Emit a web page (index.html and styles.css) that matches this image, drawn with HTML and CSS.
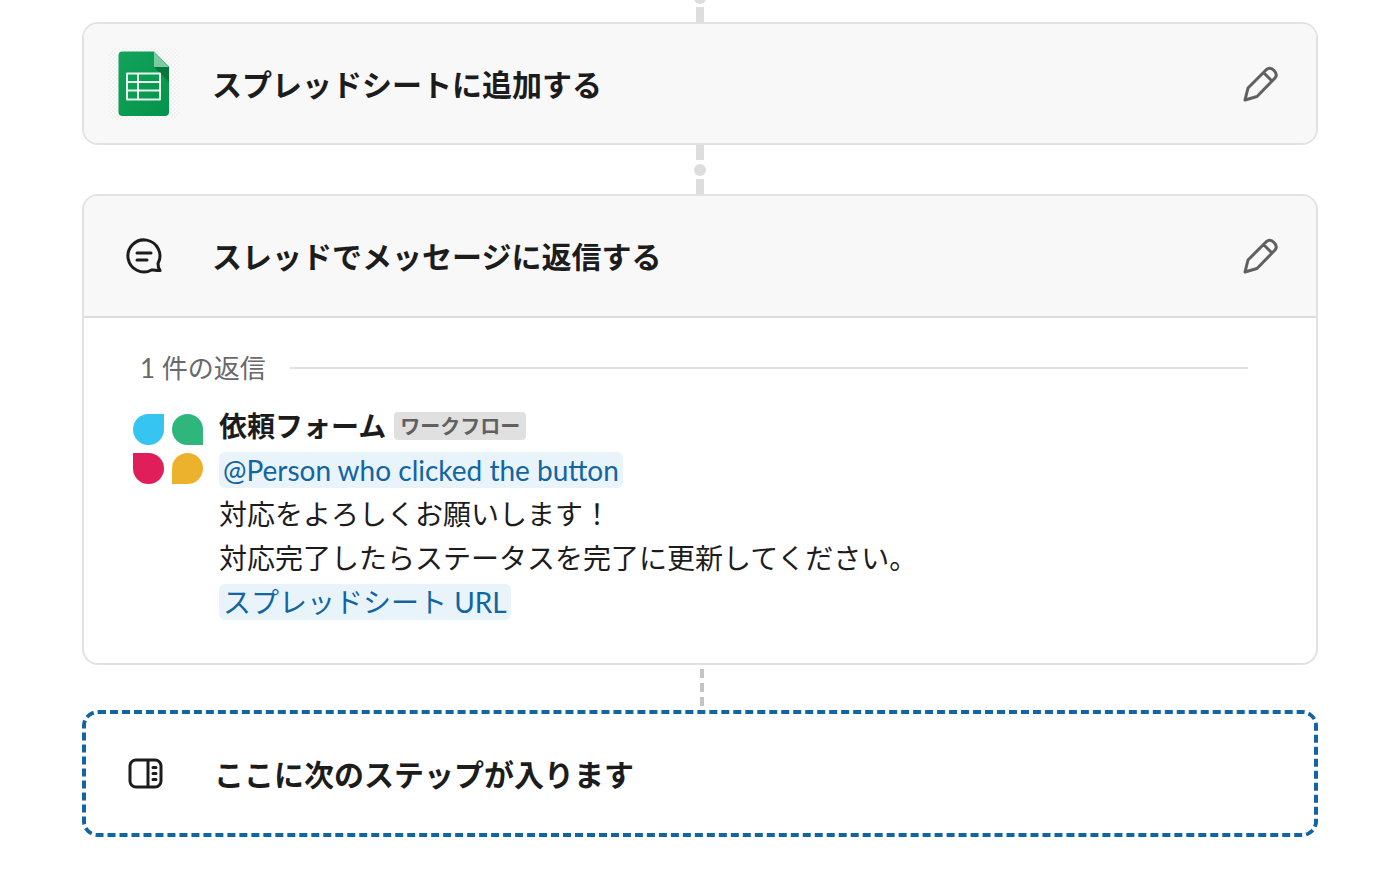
FILE: index.html
```
<!DOCTYPE html>
<html lang="ja">
<head>
    <meta charset="UTF-8">
    <meta name="viewport" content="width=device-width, initial-scale=1.0">
    <title>ワークフロー</title>
    <link rel="stylesheet" href="styles.css">
</head>
<body>
    <main class="workflow">
        <div class="connector connector-first"><span class="dot"></span></div>

        <section class="step">
            <div class="step-header">
                <div class="step-icon sheets-icon">
                    <svg width="72" height="72" viewBox="0 0 72 72" aria-hidden="true">
                        <defs>
                            <linearGradient id="sheet" x1="0" y1="0" x2="1" y2="1">
                                <stop offset="0" stop-color="#12a35c"/>
                                <stop offset="1" stop-color="#04934a"/>
                            </linearGradient>
                        </defs>
                        <path d="M14.500 3.500H46l15 15v45.500a4 4 0 0 1-4 4H14.500a4 4 0 0 1-4-4v-56.500a4 4 0 0 1 4-4z" fill="url(#sheet)"/>
                        <path d="M46 19h15v15z" fill="#04763a"/>
                        <path d="M46 3.500l15 15.500H46z" fill="#7acba4"/>
                        <path d="M19 25.500h33v26H19zM19 34h33M19 42.500h33M30 25.500v26" fill="none" stroke="#e9f8ef" stroke-width="2"/>
                    </svg>
                </div>
                <h2>スプレッドシートに追加する</h2>
                <button type="button" class="edit-button" aria-label="編集">
                    <svg width="36" height="36" viewBox="0 0 36 36" aria-hidden="true">
                        <path d="M2 34l3-12L23.500 3.500q3.500-3 7.500 1t1 7.500L14 30.500zM20.500 6.500l8.500 8.500"/>
                    </svg>
                </button>
            </div>
        </section>

        <div class="connector"><span class="dot"></span></div>

        <section class="step">
            <div class="step-header with-body">
                <div class="step-icon">
                    <svg width="36" height="36" viewBox="0 0 36 36" aria-hidden="true">
                        <path d="M32 25.500A16 16 0 1 0 25.500 32c3-.6 5 1 8.500.5-1.500-2-2-4-2-7z"/>
                        <path d="M11 15h14M11 22h10" stroke-linecap="round"/>
                    </svg>
                </div>
                <h2>スレッドでメッセージに返信する</h2>
                <button type="button" class="edit-button" aria-label="編集">
                    <svg width="36" height="36" viewBox="0 0 36 36" aria-hidden="true">
                        <path d="M2 34l3-12L23.500 3.500q3.500-3 7.500 1t1 7.500L14 30.500zM20.500 6.500l8.500 8.500"/>
                    </svg>
                </button>
            </div>
            <div class="step-body">
                <div class="reply-count">1 件の返信</div>
                <div class="message">
                    <div class="avatar">
                        <span class="petal blue"></span>
                        <span class="petal green"></span>
                        <span class="petal red"></span>
                        <span class="petal yellow"></span>
                    </div>
                    <div class="message-text">
                        <p class="sender"><strong>依頼フォーム</strong><span class="badge">ワークフロー</span></p>
                        <p><span class="chip">@Person who clicked the button</span></p>
                        <p>対応をよろしくお願いします！</p>
                        <p>対応完了したらステータスを完了に更新してください。</p>
                        <p><span class="chip">スプレッドシート URL</span></p>
                    </div>
                </div>
            </div>
        </section>

        <div class="connector-dashed"></div>

        <section class="step step-next">
            <div class="step-header">
                <div class="step-icon">
                    <svg width="36" height="36" viewBox="0 0 36 36" aria-hidden="true">
                        <rect x="2" y="4" width="31" height="27" rx="6"/>
                        <path d="M20 4v27"/>
                        <path d="M25 11.500h3M25 17.500h3M25 23.500h3" stroke-linecap="round"/>
                    </svg>
                </div>
                <h2>ここに次のステップが入ります</h2>
            </div>
        </section>
    </main>
</body>
</html>
```
FILE: styles.css
```
* {
    box-sizing: border-box;
}
body {
    margin: 0;
    background: #fff;
    color: #1d1c1d;
    font-family: Lato, "Noto Sans CJK JP", sans-serif;
    overflow-x: hidden;
}
h2, p {
    margin: 0;
}
.workflow {
    display: flex;
    flex-direction: column;
    padding: 0 82px 36px;
}

/* Steps */
.step {
    border: 2px solid #e2e2e2;
    border-radius: 16px;
    overflow: hidden;
}
.step-header {
    display: flex;
    align-items: center;
    gap: 32px;
    min-height: 119px;
    padding: 0 37px 0 24px;
    background: #f8f8f8;
}
.step-header.with-body {
    min-height: 122px;
    border-bottom: 2px solid #dddddd;
}
.step-header h2 {
    flex: 1;
    font-size: 30px;
    font-weight: 700;
    line-height: 44px;
}
.step-icon {
    display: flex;
    align-items: center;
    justify-content: center;
    width: 72px;
    height: 72px;
}
.step-icon svg {
    fill: none;
    stroke: #1d1c1d;
    stroke-width: 3;
    stroke-linejoin: round;
}
.sheets-icon {
    border-radius: 8px;
    background: repeating-conic-gradient(#f2f2f2 0% 25%, #fafafa 0% 50%) 0 0 / 4px 4px;
}
.sheets-icon svg {
    stroke: none;
}
.edit-button {
    display: flex;
    padding: 0;
    border: none;
    background: transparent;
    cursor: pointer;
}
.edit-button svg {
    fill: none;
    stroke: #616061;
    stroke-width: 3;
    stroke-linejoin: round;
}
.step-next {
    border: 4px dashed #1264a3;
}
.step-next .step-header {
    background: #fff;
}

/* Lines between steps */
.connector {
    display: flex;
    flex-direction: column;
    align-items: center;
    justify-content: space-between;
    height: 49px;
}
.connector::before,
.connector::after {
    content: "";
    width: 8px;
    height: 15px;
    background: #dddddd;
}
.connector-first {
    margin-top: -27px;
}
.dot {
    width: 12px;
    height: 12px;
    border-radius: 50%;
    background: #dddddd;
}
.connector-dashed {
    width: 4px;
    height: 37px;
    margin: 4px 0 4px 50%;
    background: repeating-linear-gradient(#c4c4c4 0 9px, transparent 9px 14px);
}

/* Reply preview */
.step-body {
    padding: 32px 68px 39px 49px;
}
.reply-count {
    display: flex;
    align-items: center;
    gap: 24px;
    padding-left: 7px;
    color: #696969;
    font-size: 26px;
    line-height: 36px;
}
.reply-count::after {
    content: "";
    flex: 1;
    height: 2px;
    background: #e2e2e2;
}
.message {
    display: flex;
    gap: 16px;
    margin-top: 18px;
}
.avatar {
    display: grid;
    grid-template-columns: 31px 31px;
    grid-template-rows: 31px 31px;
    gap: 8px;
    padding-top: 10px;
}
.petal {
    border-radius: 50%;
}
.blue {
    background: #36c5f0;
    border-top-right-radius: 0;
}
.green {
    background: #2eb67d;
    border-bottom-right-radius: 0;
}
.red {
    background: #e01e5a;
    border-top-left-radius: 0;
}
.yellow {
    background: #ecb22e;
    border-bottom-left-radius: 0;
}
.message-text {
    font-size: 28px;
    line-height: 44px;
}
.message-text p {
    display: flex;
    align-items: center;
    min-height: 44px;
}
.sender {
    gap: 8px;
}
.badge {
    padding: 0 6px;
    border-radius: 4px;
    background: #e0e0e0;
    color: #616061;
    font-size: 20px;
    font-weight: 700;
    line-height: 28px;
}
.chip {
    padding: 0 4px;
    border-radius: 6px;
    background: #e8f4fa;
    color: #1264a3;
    line-height: 36px;
}
```
